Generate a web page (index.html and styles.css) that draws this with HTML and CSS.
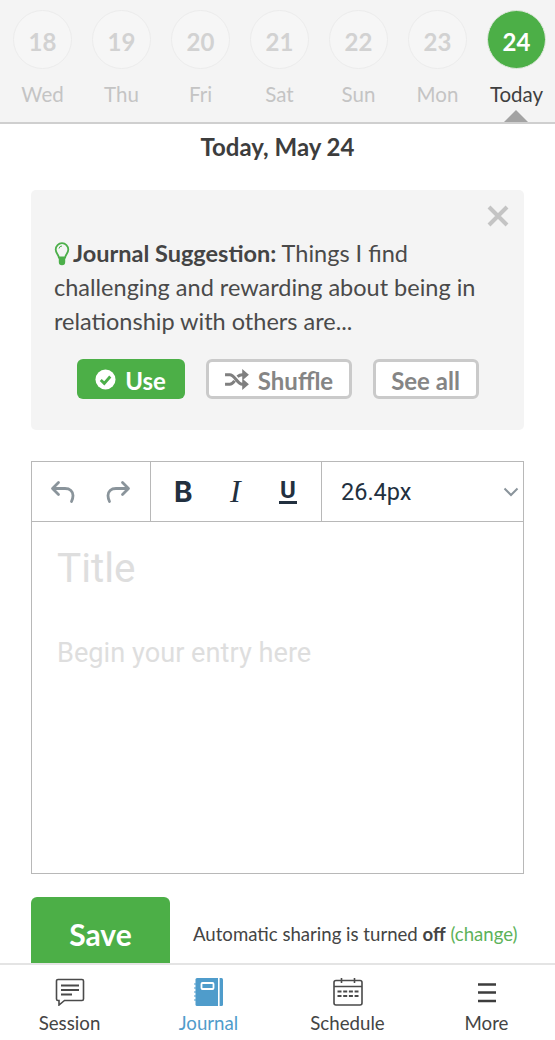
FILE: index.html
```html
<!DOCTYPE html>
<html lang="en">
<head>
<meta charset="utf-8">
<title>Journal</title>
<link rel="stylesheet" href="styles.css">
</head>
<body>
<div class="app">
  <header class="days">
    <div class="day"><span class="circle">18</span><span class="label">Wed</span></div>
    <div class="day"><span class="circle">19</span><span class="label">Thu</span></div>
    <div class="day"><span class="circle">20</span><span class="label">Fri</span></div>
    <div class="day"><span class="circle">21</span><span class="label">Sat</span></div>
    <div class="day"><span class="circle">22</span><span class="label">Sun</span></div>
    <div class="day"><span class="circle">23</span><span class="label">Mon</span></div>
    <div class="day active"><span class="circle">24</span><span class="label">Today</span><span class="caret"></span></div>
  </header>
  <main class="main">
    <h1 class="heading">Today, May 24</h1>
    <section class="card">
      <button class="close" aria-label="Close"><svg viewBox="0 0 22 22" width="22" height="22"><path d="M2 2 20 20M20 2 2 20" stroke="#c4c4c4" stroke-width="4" fill="none"/></svg></button>
      <p class="prompt"><svg class="bulb" viewBox="0 0 16 24" width="16" height="24"><path d="M8 1.200a6.300 6.300 0 0 0-6.300 6.300c0 3.400 2.600 4.800 3.200 8h6.200c.6-3.200 3.200-4.600 3.200-8A6.300 6.300 0 0 0 8 1.200z" fill="none" stroke="#4caf4a" stroke-width="1.800"/><path d="M4.800 15.500h6.400v4.500a3.200 3.200 0 0 1-6.400 0z" fill="#4caf4a"/><path d="M5 6.500A3 3 0 0 1 8 4" stroke="#4caf4a" fill="none" stroke-width="1"/></svg> <strong>Journal Suggestion:</strong> Things I find challenging and rewarding about being in relationship with others are...</p>
      <div class="actions">
        <button class="btn btn-use"><svg viewBox="0 0 22 22" width="21" height="21"><circle cx="11" cy="11" r="10.500" fill="#fff"/><path d="M6 11.500 9.700 15 16 7.800" fill="none" stroke="#4caf4a" stroke-width="3"/></svg>Use</button>
        <button class="btn btn-line"><svg viewBox="0 0 26 22" width="25" height="21"><path d="M1 6h5c5 0 8 10 13 10h2M1 16h5c2 0 3.500-1.500 5-3.500M14 8c1.500-1.200 3-2 5-2h2" fill="none" stroke="#7f7f7f" stroke-width="3.200"/><path d="M19 0l7 6-7 6zM19 10l7 6-7 6z" fill="#7f7f7f"/></svg>Shuffle</button>
        <button class="btn btn-line">See all</button>
      </div>
    </section>
    <section class="editor">
      <div class="toolbar">
        <div class="tool-group history">
          <svg viewBox="0 0 26 26" width="26" height="26"><path d="M8.500 3.500 2.500 9.500l6 6M3 9.500h12c5 0 8 3 8 7 0 2-.6 4-1.500 6" fill="none" stroke="#8a949b" stroke-width="2.800" stroke-linecap="round" stroke-linejoin="round"/></svg>
          <svg viewBox="0 0 26 26" width="26" height="26"><path d="M17.500 3.500l6 6-6 6M23 9.500H11c-5 0-8 3-8 7 0 2 .6 4 1.500 6" fill="none" stroke="#8a949b" stroke-width="2.800" stroke-linecap="round" stroke-linejoin="round"/></svg>
        </div>
        <div class="tool-group format">
          <span class="fmt-b">B</span>
          <span class="fmt-i">I</span>
          <span class="fmt-u">U</span>
        </div>
        <div class="size"><span>26.4px</span><svg viewBox="0 0 16 10" width="16" height="10"><path d="M1.500 1.500 8 8l6.500-6.500" fill="none" stroke="#8a949b" stroke-width="2"/></svg></div>
      </div>
      <div class="compose">
        <div class="ph-title">Title</div>
        <div class="ph-body">Begin your entry here</div>
      </div>
    </section>
    <section class="savebar">
      <button class="save">Save</button>
      <p class="sharing">Automatic sharing is turned <strong>off</strong> <a class="change">(change)</a></p>
    </section>
  </main>
  <nav class="nav">
    <a class="nav-item"><svg viewBox="0 0 30 28" width="30" height="28"><path d="M3 1.500h24a1.500 1.500 0 0 1 1.500 1.500v18a1.500 1.500 0 0 1-1.500 1.500H9.500L4 27v-4.500H3A1.500 1.500 0 0 1 1.500 21V3A1.500 1.500 0 0 1 3 1.500z" fill="none" stroke="#4a4a4a" stroke-width="1.600"/><path d="M6 7.500h18M6 12h18M6 16.500h11" stroke="#4a4a4a" stroke-width="1.800"/></svg><span>Session</span></a>
    <a class="nav-item current"><svg viewBox="0 0 30 28" width="30" height="28"><rect x="1.500" y="0" width="27.500" height="28" rx="1.500" fill="#4f9ccb"/><rect x="24" y="0" width="1.600" height="28" fill="#fff"/><rect x="7.500" y="5" width="12" height="6" rx="1" fill="none" stroke="#fff" stroke-width="1.800"/><path d="M0 6h2.500M0 10h2.500M0 14h2.500M0 18h2.500M0 22h2.500" stroke="#4f9ccb" stroke-width="1.200"/></svg><span>Journal</span></a>
    <a class="nav-item"><svg viewBox="0 0 30 28" width="30" height="28"><rect x="1" y="2.500" width="28" height="24.500" rx="2" fill="none" stroke="#4a4a4a" stroke-width="1.600"/><path d="M1 8.500h28M8.500 0v5M21.500 0v5" stroke="#4a4a4a" stroke-width="1.600"/><path d="M4.500 13.500h21M4.500 18h21" stroke="#4a4a4a" stroke-width="2" stroke-dasharray="4 1.700"/></svg><span>Schedule</span></a>
    <a class="nav-item"><svg viewBox="0 0 30 28" width="30" height="28"><path d="M6 6.500h18M6 14.500h18M6 23h18" stroke="#3d3d3d" stroke-width="2.600"/></svg><span>More</span></a>
  </nav>
</div>
</body>
</html>
```
FILE: styles.css
```css
* { box-sizing: border-box; }
html, body { margin: 0; padding: 0; }
body { font-family: Lato, "Liberation Sans", sans-serif; color: #444; background: #fff; }
button { font-family: inherit; cursor: pointer; }
p, h1 { margin: 0; }
.app { width: 555px; height: 1040px; display: flex; flex-direction: column; overflow: hidden; }

.days { height: 124px; flex: none; background: #f4f4f4; border-bottom: 2px solid #cfcfcf; display: grid; grid-template-columns: repeat(7, 79px); padding: 10px 0 0 3px; }
.day { position: relative; display: flex; flex-direction: column; align-items: center; }
.circle { width: 59px; height: 59px; border-radius: 50%; border: 1px solid #ececec; background: #f6f6f6; color: #d2d2d2; font-size: 24px; font-weight: 700; padding-top: 4px; display: flex; align-items: center; justify-content: center; }
.label { margin-top: 11px; font-size: 20.500px; line-height: 28px; color: #c4c4c4; }
.active .circle { background: #4caf47; border-color: #e0e8de; color: #fff; }
.active .label { color: #3f3f3f; }
.caret { position: absolute; top: 100px; left: 27px; border: 12px solid transparent; border-top: 0; border-bottom: 12px solid #a3a3a3; }

.main { flex: 1; min-height: 0; overflow: hidden; padding: 0 31px; }
.heading { font-size: 24px; font-weight: 700; line-height: 30px; margin: 8px 0 28px; text-align: center; color: #3d3d3d; }

.card { position: relative; height: 240px; background: #f4f4f4; border-radius: 5px; padding: 46px 23px 0; }
.close { position: absolute; top: 15px; right: 15px; padding: 0; width: 22px; height: 22px; border: 0; background: none; }
.close svg { display: block; }
.prompt { font-size: 23.500px; line-height: 34px; color: #4a4a4a; }
.prompt strong { color: #444; }
.bulb { vertical-align: -4px; margin-right: -3px; }
.actions { display: flex; justify-content: center; gap: 21px; margin-top: 21px; }
.btn { height: 40px; border-radius: 6px; font-size: 24px; font-weight: 700; display: flex; align-items: center; justify-content: center; gap: 9px; padding: 3px 0 0; }
.btn svg { margin-top: -3px; }
.btn-use { width: 108px; background: #4caf47; border: 0; color: #fff; }
.btn-line { border: 3px solid #cacaca; background: #fff; color: #858585; }
.btn-line:nth-child(2) { width: 146px; }
.btn-line:nth-child(3) { width: 106px; }

.editor { margin-top: 31px; height: 413px; border: 1px solid #b8b8b8; display: flex; flex-direction: column; }
.toolbar { height: 60px; flex: none; border-bottom: 1px solid #b8b8b8; display: flex; }
.tool-group { display: flex; align-items: center; border-right: 1px solid #b8b8b8; }
.history { width: 119px; gap: 29px; padding-left: 18px; }
.format { width: 171px; gap: 0; font-family: Roboto, sans-serif; color: #22303f; padding-left: 23px; }
.fmt-b { width: 53px; font-size: 28px; font-weight: 700; font-family: Inter, Roboto, sans-serif; }
.fmt-i { width: 52px; font-size: 32px; font-family: "Liberation Serif", serif; font-style: italic; padding-left: 3px; }
.fmt-u { font-size: 24px; font-weight: 700; line-height: 22px; border-bottom: 3px solid #22303f; height: 25px; width: 18px; display: flex; justify-content: center; align-items: flex-start; }
.size { flex: 1; display: flex; align-items: center; justify-content: space-between; padding: 0 4px 0 19px; font-family: Roboto, sans-serif; font-size: 23.500px; color: #22303f; }
.compose { flex: 1; padding: 23px 25px; font-family: Roboto, sans-serif; color: #dedede; }
.ph-title { font-size: 40.500px; line-height: 46px; }
.ph-body { margin-top: 45px; font-size: 27.200px; line-height: 34px; }

.savebar { margin-top: 23px; display: flex; align-items: flex-start; }
.save { width: 139px; height: 74px; flex: none; background: #4caf47; border: 0; border-radius: 6px; color: #fff; font-size: 30px; font-weight: 700; }
.sharing { margin: 25px 0 0 23px; font-size: 18.600px; line-height: 24px; white-space: nowrap; color: #444; }
.change { color: #5cb259; }

.nav { height: 77px; flex: none; border-top: 2px solid #e4e4e4; background: #fff; display: grid; grid-template-columns: repeat(4, 139px); }
.nav-item { display: flex; flex-direction: column; align-items: center; padding-top: 13px; font-size: 18.700px; line-height: 24px; color: #444; }
.nav-item span { margin-top: 5px; }
.nav-item svg { display: block; }
.current { color: #4f9ccb; }
```
